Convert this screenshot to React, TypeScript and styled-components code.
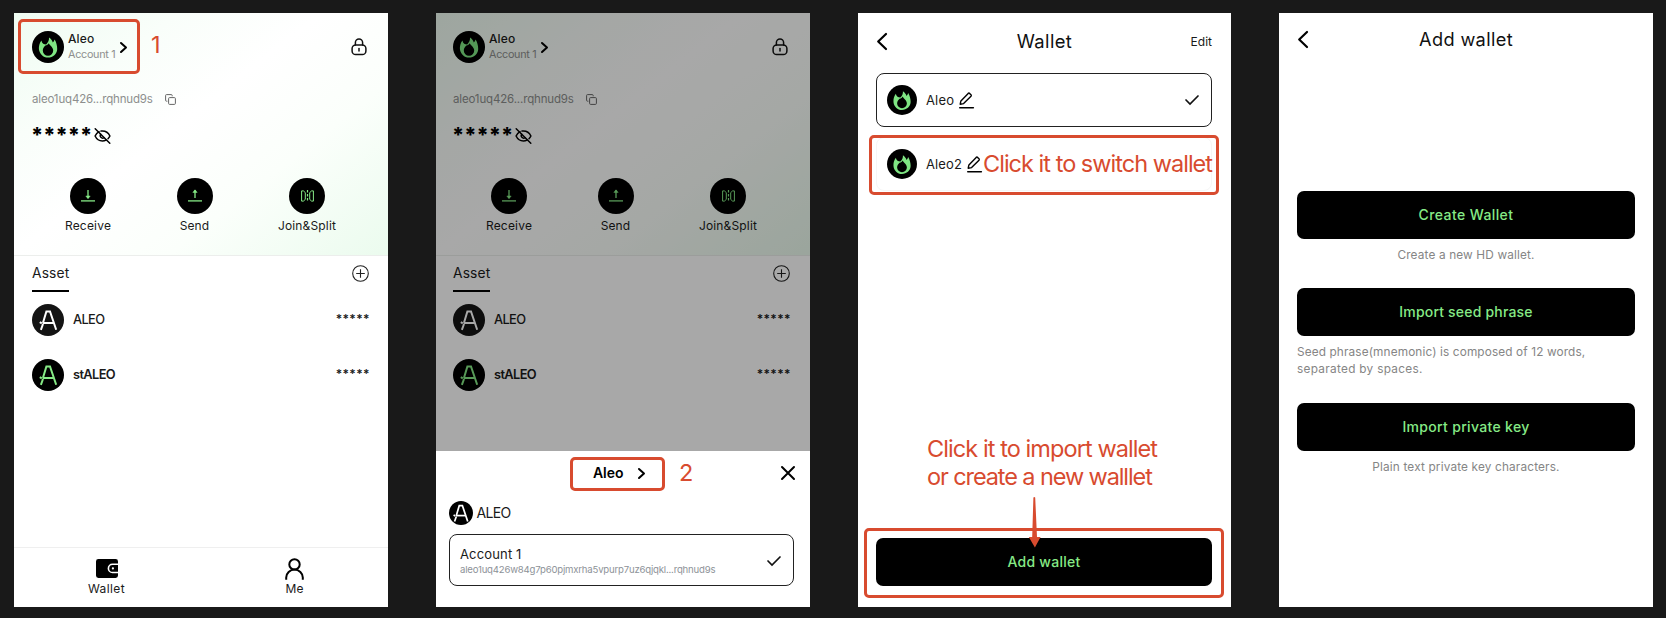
import React from "react";
import styled, { createGlobalStyle, css } from "styled-components";

const RED = "#d84b2f";
const GREEN = "#86ea86";

const Global = createGlobalStyle`
  * { box-sizing: border-box; }
  html, body { margin: 0; padding: 0; background: #191919; }
  body { font-family: Inter, "Liberation Sans", sans-serif; color: #111; overflow: hidden; }
`;

const Board = styled.main`
  display: flex;
  gap: 48px;
  width: 1666px;
  height: 618px;
  padding: 13px 14px;
`;

const Screen = styled.section<{ $w?: number }>`
  position: relative;
  flex: none;
  display: flex;
  flex-direction: column;
  width: ${(p) => p.$w ?? 374}px;
  height: 594px;
  background: #fff;
`;

const Text = styled.span<{ $s: number; $lh?: number; $ls?: number; $wt?: number; $c?: string }>`
  display: block;
  width: max-content;
  font-size: ${(p) => p.$s}px;
  line-height: ${(p) => p.$lh ?? 18}px;
  letter-spacing: ${(p) => p.$ls ?? 0}px;
  font-weight: ${(p) => p.$wt ?? 400};
  color: ${(p) => p.$c ?? "#1a1a1a"};
  white-space: nowrap;
`;

const Icon = styled.svg`
  display: block;
  flex: none;
  overflow: visible;
`;

/* ---------- icons ---------- */

const Flame = ({ size }: { size: number }) => (
  <Icon width={size} height={size} viewBox="0 0 32 32">
    <circle cx="16" cy="16" r="16" fill="#000" />
    <path
      d="M9.4 9.4C7.4 12 6.7 15.2 6.9 18C7.4 22.8 11.1 26.6 16 26.6C20.9 26.6 25 23 25.2 18.2C25.3 14.6 24.2 11 22.6 8.4C22.2 9.8 21.6 10.8 20.8 11.6C20.2 9.6 19 8 17 6.6C17.2 9.4 16.2 11.2 14.2 13.4C12 13.4 10 12.4 9.4 9.4Z"
      fill="#7fe583"
    />
    <path
      d="M16.8 12.2C17.4 14.4 21.2 15.8 21.2 19.6A5.2 5.2 0 0 1 10.8 19.6C10.8 17.4 12 15.8 13.4 14.6C14.8 14.2 16.2 13.4 16.8 12.2Z"
      fill="#000"
    />
  </Icon>
);

const AleoMark = ({ size, color = "#fff", bg = "#000", big }: { size: number; color?: string; bg?: string; big?: boolean }) => (
  <Icon width={size} height={size} viewBox="0 0 32 32">
    <circle cx="16" cy="16" r="16" fill={bg} />
    <g
      fill="none"
      stroke={color}
      strokeWidth="2"
      transform={big ? "translate(16 16) scale(1.15) translate(-16.4 -16)" : undefined}
    >
      <path d="M11 18.8L14.4 7.4H18L24.2 25.8" />
      <path d="M10.6 19H21.8" />
      <path d="M7.8 18.2L9.8 19.4" />
      <path d="M11 20L8.9 25.8" />
    </g>
  </Icon>
);

const Chevron = ({ w, h, sw, left }: { w: number; h: number; sw: number; left?: boolean }) => (
  <Icon width={w} height={h} viewBox={`0 0 ${w} ${h}`}>
    <path
      d={left ? `M${w - 1} 1L1.2 ${h / 2}L${w - 1} ${h - 1}` : `M1 1L${w - 1} ${h / 2}L1 ${h - 1}`}
      fill="none"
      stroke="#000"
      strokeWidth={sw}
      strokeLinecap="round"
      strokeLinejoin="round"
    />
  </Icon>
);

const Lock = () => (
  <Icon width="16" height="18" viewBox="0 0 16 18" fill="none" stroke="#111" strokeWidth="1.5" strokeLinecap="round">
    <path d="M4.4 7V4.6A3.6 3.6 0 0 1 11.6 4.6V7" />
    <rect x="1.1" y="7" width="13.8" height="9.6" rx="3.6" />
    <path d="M8 10.6V13" />
  </Icon>
);

const Copy = () => (
  <Icon width="11" height="11" viewBox="0 0 11 11" fill="none" stroke="#666" strokeWidth="1">
    <rect x="3.6" y="3.6" width="6.8" height="6.8" rx="1" />
    <path d="M2.4 7.2H1.5A.9.9 0 0 1 .6 6.3V1.5A.9.9 0 0 1 1.5.6H6.3A.9.9 0 0 1 7.2 1.5V2.3" />
  </Icon>
);

const EyeOff = () => (
  <Icon width="17" height="16" viewBox="0 0 17 16" fill="none" stroke="#000" strokeWidth="1.5" strokeLinecap="round">
    <path d="M5 3.6C3.2 4.6 1.8 6.4 1.1 8C2.6 11.2 5.4 13 8.4 13C9.8 13 11 12.6 12.1 12" />
    <path d="M7 3.1C11.2 2.6 14.4 4.8 15.9 8C15.4 9.1 14.8 9.9 14 10.7" />
    <path d="M6.6 6.2A2.6 2.6 0 0 0 10 9.9" />
    <path d="M1.2 .8L15.8 15.2" />
  </Icon>
);

const Transfer = ({ up }: { up?: boolean }) => (
  <Icon width="14" height="13" viewBox="0 0 14 13" fill="none" stroke={GREEN} strokeWidth="1.3">
    <path d="M0 11.9H14" />
    <path d="M7 1V9" />
    {up ? (
      <path d="M4.8 3.4L7 .8L9.2 3.4Z" fill={GREEN} strokeWidth=".5" />
    ) : (
      <path d="M4.8 7L7 9.8L9.2 7Z" fill={GREEN} strokeWidth=".5" />
    )}
  </Icon>
);

const JoinSplit = () => (
  <Icon width="13" height="12" viewBox="0 0 13 12" fill="none" stroke={GREEN} strokeWidth="1">
    <path d="M.6 .9H2.4L4.3 2.6V9.4L2.4 11.1H.6Z" />
    <path d="M12.4 .9H10.6L8.7 2.6V9.4L10.6 11.1H12.4Z" />
    <path d="M6.5 0V12" strokeDasharray="2.4 1.6" strokeWidth="1.2" />
  </Icon>
);

const PlusCircle = () => (
  <Icon width="17" height="17" viewBox="0 0 17 17" fill="none" stroke="#222" strokeWidth="1.1">
    <circle cx="8.5" cy="8.5" r="7.8" />
    <path d="M8.5 4.2V12.8M4.2 8.5H12.8" />
  </Icon>
);

const WalletIcon = () => (
  <Icon width="22" height="19" viewBox="0 0 22 19">
    <path d="M2.4 0H19.6A2.4 2.4 0 0 1 22 2.4V4.6H16.4A4.8 4.8 0 0 0 16.4 14.2H22V16.6A2.4 2.4 0 0 1 19.6 19H2.4A2.4 2.4 0 0 1 0 16.6V2.4A2.4 2.4 0 0 1 2.4 0Z" fill="#000" />
    <path d="M22 6H16.6A3.4 3.4 0 0 0 16.6 12.8H22Z" fill="#000" />
    <circle cx="16.9" cy="9.4" r="1.1" fill="#fff" />
  </Icon>
);

const Person = () => (
  <Icon width="19" height="22" viewBox="0 0 19 22" fill="none" stroke="#000" strokeWidth="2">
    <circle cx="9.5" cy="6.4" r="5.2" />
    <path d="M1.2 21.8V19.6A8.3 8 0 0 1 17.8 19.6V21.8" />
  </Icon>
);

const Close = () => (
  <Icon width="14" height="14" viewBox="0 0 14 14" stroke="#000" strokeWidth="2" strokeLinecap="round">
    <path d="M1 1L13 13M13 1L1 13" />
  </Icon>
);

const Check = () => (
  <Icon width="14" height="10" viewBox="0 0 14 10" fill="none" stroke="#111" strokeWidth="1.7" strokeLinecap="round">
    <path d="M1 5L5 9L13 1" />
  </Icon>
);

const Pencil = () => (
  <Icon width="15" height="17" viewBox="0 0 15 17" fill="none" stroke="#000" strokeWidth="1.4" strokeLinejoin="round" strokeLinecap="round">
    <path d="M1.2 12.2L1.9 8.9L9.2 1.4Q9.9 .8 10.6 1.4L12 2.8Q12.6 3.5 12 4.2L4.6 11.6Z" />
    <path d="M.7 15.7H14.4" />
  </Icon>
);

const Arrow = styled.svg`
  position: absolute;
  left: 170px;
  top: 483px;
`;

/* ---------- home screen ---------- */

const Hero = styled.header<{ $pad: number }>`
  display: flex;
  flex-direction: column;
  height: 243px;
  padding: 18px ${(p) => 39 - p.$pad}px 0 ${(p) => p.$pad}px;
  border-bottom: 1px solid #eceeec;
  background: linear-gradient(142deg, #effcf2 0%, #f9fefa 24%, #fff 45%, #fbfffb 68%, #ebfbee 100%);
`;

const Row = styled.div<{ $gap?: number; $h?: number; $between?: boolean }>`
  display: flex;
  align-items: center;
  gap: ${(p) => p.$gap ?? 0}px;
  ${(p) => p.$h && css`height: ${p.$h}px;`}
  ${(p) => p.$between && css`justify-content: space-between;`}
`;

const Names = styled.div`
  display: flex;
  flex-direction: column;
  width: 48px;
  height: 32px;
`;

const AddressRow = styled(Row)`
  margin-top: 27px;
  height: 18px;
`;

const BalanceRow = styled(Row)`
  margin-top: 13px;
  height: 24px;
  align-items: flex-start;
`;

const Balance = styled.div`
  width: 59px;
  padding-top: 3px;
  margin-left: -1px;
`;

const EyeSlot = styled.div`
  padding: 7px 0 0 4px;
`;

const Actions = styled.nav`
  display: flex;
  margin-top: 32.5px;
`;

const Action = styled.div<{ $w: number }>`
  display: flex;
  flex-direction: column;
  flex: none;
  align-items: center;
  gap: 3.5px;
  width: ${(p) => p.$w}px;
`;

const Disc = styled.div`
  display: grid;
  place-items: center;
  width: 36px;
  height: 36px;
  border-radius: 50%;
  background: #000;
`;

const Assets = styled.div<{ $pad: number }>`
  flex: 1;
  padding: 0 ${(p) => 37 - p.$pad}px 0 ${(p) => p.$pad}px;
`;

const TabRow = styled.div`
  display: flex;
  align-items: flex-start;
  justify-content: space-between;
  height: 36px;
`;

const Tab = styled.div`
  height: 36px;
  padding-top: 8px;
  border-bottom: 2px solid #000;
`;

const PlusSlot = styled.div`
  padding-top: 9px;
`;

const AssetRow = styled(Row)`
  height: 55.5px;
`;

const Stars = styled.div`
  margin: 0 -1px 0 auto;
  padding-bottom: 2px;
`;

const TabBar = styled.footer`
  display: flex;
  height: 60px;
  border-top: 1px solid #efefef;
  padding-top: 9px;
`;

const TabItem = styled.div<{ $w: number }>`
  display: flex;
  flex-direction: column;
  flex: none;
  align-items: center;
  width: ${(p) => p.$w}px;
`;

const TabGlyph = styled.div`
  display: grid;
  place-items: center;
  height: 23px;
`;

const HomeContent = ({ pad, tabs }: { pad: number; tabs?: boolean }) => (
  <>
    <Hero $pad={pad}>
      <Row $between $h={32}>
        <Row $gap={4}>
          <Flame size={32} />
          <Names>
            <Text $s={12} $lh={16} $wt={500} $ls={0.1}>Aleo</Text>
            <Text $s={10.8} $lh={15} $ls={-0.3} $c="#8d8f8e">Account 1</Text>
          </Names>
          <Chevron w={7} h={11} sw={2} />
        </Row>
        <Lock />
      </Row>
      <AddressRow $gap={12.5}>
        <Text $s={11.5} $ls={-0.15} $c="#8d8f8e">aleo1uq426...rqhnud9s</Text>
        <Copy />
      </AddressRow>
      <BalanceRow>
        <Balance><Text $s={21} $lh={24} $ls={0} $wt={800} $c="#000">*****</Text></Balance>
        <EyeSlot><EyeOff /></EyeSlot>
      </BalanceRow>
      <Actions>
        <Action $w={112}><Disc><Transfer /></Disc><Text $s={12} $ls={0.2}>Receive</Text></Action>
        <Action $w={101}><Disc><Transfer up /></Disc><Text $s={12} $ls={0.15}>Send</Text></Action>
        <Action $w={124}><Disc><JoinSplit /></Disc><Text $s={12} $ls={0.15}>Join&amp;Split</Text></Action>
      </Actions>
    </Hero>
    <Assets $pad={pad}>
      <TabRow>
        <Tab><Text $s={13.8} $ls={0.14}>Asset</Text></Tab>
        <PlusSlot><PlusCircle /></PlusSlot>
      </TabRow>
      <AssetRow $gap={9}>
        <AleoMark size={32} bg="#141414" />
        <Text $s={12.8} $ls={-0.6} $wt={500}>ALEO</Text>
        <Stars><Text $s={12} $ls={0.4} $wt={600}>*****</Text></Stars>
      </AssetRow>
      <AssetRow $gap={9}>
        <AleoMark size={32} color={GREEN} />
        <Text $s={12.8} $ls={-0.6} $wt={600}>stALEO</Text>
        <Stars><Text $s={12} $ls={0.4} $wt={600}>*****</Text></Stars>
      </AssetRow>
    </Assets>
    {tabs && (
      <TabBar>
        <TabItem $w={185}><TabGlyph><WalletIcon /></TabGlyph><Text $s={12} $ls={0.4}>Wallet</Text></TabItem>
        <TabItem $w={191}><TabGlyph><Person /></TabGlyph><Text $s={12}>Me</Text></TabItem>
      </TabBar>
    )}
  </>
);

/* ---------- callouts drawn over the screens ---------- */

const Callout = styled.div<{ $x: number; $y: number; $w: number; $h: number }>`
  position: absolute;
  left: ${(p) => p.$x}px;
  top: ${(p) => p.$y}px;
  width: ${(p) => p.$w}px;
  height: ${(p) => p.$h}px;
  border: 3px solid ${RED};
  border-radius: 5px;
`;

const Note = styled.div<{ $x: number; $y: number }>`
  position: absolute;
  left: ${(p) => p.$x}px;
  top: ${(p) => p.$y}px;
`;

/* ---------- account sheet ---------- */

const Shade = styled.div`
  position: absolute;
  inset: 0;
  display: flex;
  flex-direction: column;
  justify-content: flex-end;
  background: rgba(0, 0, 0, 0.34);
`;

const Sheet = styled.div`
  height: 156px;
  padding: 0 15px 0 13px;
  background: #fff;
`;

const SheetHead = styled.div`
  display: grid;
  grid-template-columns: 1fr auto 1fr;
  align-items: center;
  height: 44px;
`;

const SheetTitle = styled(Row)`
  grid-column: 2;
  margin-right: 6.5px;
`;

const CloseSlot = styled.div`
  justify-self: end;
`;

const AccountCard = styled.div`
  display: flex;
  align-items: center;
  justify-content: space-between;
  height: 52px;
  width: 345px;
  margin-top: 4px;
  padding: 1px 12px 0 10px;
  border: 1px solid #222;
  border-radius: 8px;
`;

/* ---------- wallet screens ---------- */

const TopBar = styled.header<{ $h: number; $px: number }>`
  display: grid;
  grid-template-columns: 1fr auto 1fr;
  align-items: center;
  height: ${(p) => p.$h}px;
  padding: 0 ${(p) => p.$px}px;
`;

const Title = styled.div`
  padding-bottom: 2px;
`;

const RightSlot = styled.div`
  justify-self: end;
`;

const WalletList = styled.div`
  display: flex;
  flex-direction: column;
  gap: 10px;
  padding: 3px 19px 0 18px;
`;

const WalletRow = styled.div<{ $active?: boolean }>`
  display: flex;
  align-items: center;
  height: 54px;
  padding: 0 12px 0 10px;
  border: 1px solid ${(p) => (p.$active ? "#222" : "#f6f6f6")};
  border-radius: 8px;
`;

const RowName = styled.div`
  margin: 0 5px 0 9px;
`;

const Spacer = styled.div`
  flex: 1;
`;

const Button = styled.button`
  display: flex;
  align-items: center;
  justify-content: center;
  width: 100%;
  height: 48px;
  padding: 0;
  border: 0;
  border-radius: 7px;
  background: #000;
  font-family: inherit;
`;

const Footer = styled.div`
  padding: 0 19px 20.6px 18px;
`;

const Options = styled.div`
  display: flex;
  flex-direction: column;
  padding: 125.4px 18px 0;
`;

const Hint = styled.div<{ $h: number; $left?: boolean }>`
  display: flex;
  flex-direction: column;
  align-items: ${(p) => (p.$left ? "flex-start" : "center")};
  height: ${(p) => p.$h}px;
  padding-top: 7px;
`;

export default function App() {
  return (
    <>
      <Global />
      <Board>
        <Screen>
          <HomeContent pad={18} tabs />
          <Callout $x={4} $y={6} $w={122} $h={55} />
          <Note $x={137} $y={18}><Text $s={23.5} $lh={28} $c={RED}>1</Text></Note>
        </Screen>
        <Screen>
          <HomeContent pad={17} />
          <Shade>
            <Sheet>
              <SheetHead>
                <SheetTitle $gap={14}>
                  <Text $s={14} $wt={600} $c="#000">Aleo</Text>
                  <Chevron w={7} h={11} sw={2} />
                </SheetTitle>
                <CloseSlot><Close /></CloseSlot>
              </SheetHead>
              <Row $gap={3.5} $h={35}>
                <AleoMark size={24} big />
                <Text $s={14} $ls={-0.7}>ALEO</Text>
              </Row>
              <AccountCard>
                <div>
                  <Text $s={13} $lh={18} $ls={0.15}>Account 1</Text>
                  <Text $s={9.6} $lh={14} $ls={-0.2} $c="#8d9298">
                    aleo1uq426w84g7p60pjmxrha5vpurp7uz6qjqkl...rqhnud9s
                  </Text>
                </div>
                <Check />
              </AccountCard>
            </Sheet>
          </Shade>
          <Callout $x={134} $y={444} $w={95} $h={34} />
          <Note $x={243} $y={446}><Text $s={23.5} $lh={28} $c={RED}>2</Text></Note>
        </Screen>
        <Screen $w={373}>
          <TopBar $h={57} $px={19}>
            <Chevron w={10} h={17} sw={2.2} left />
            <Title><Text $s={18.4} $lh={24} $ls={0.4} $c="#111">Wallet</Text></Title>
            <RightSlot><Text $s={12}>Edit</Text></RightSlot>
          </TopBar>
          <WalletList>
            <WalletRow $active>
              <Flame size={30} />
              <RowName><Text $s={13} $ls={0.15}>Aleo</Text></RowName>
              <Pencil />
              <Spacer />
              <Check />
            </WalletRow>
            <WalletRow>
              <Flame size={30} />
              <RowName><Text $s={13} $ls={0.1}>Aleo2</Text></RowName>
              <Pencil />
            </WalletRow>
          </WalletList>
          <Spacer />
          <Footer>
            <Button><Text $s={14} $ls={0.25} $wt={500} $c={GREEN}>Add wallet</Text></Button>
          </Footer>
          <Callout $x={11} $y={122} $w={350} $h={60} />
          <Note $x={125} $y={137}><Text $s={23.5} $lh={28} $ls={-0.98} $c={RED}>Click it to switch wallet</Text></Note>
          <Note $x={69} $y={422}>
            <Text $s={23.5} $lh={28} $ls={-0.92} $c={RED}>Click it to import wallet</Text>
            <Text $s={23.5} $lh={27} $ls={-1.1} $c={RED}>or create a new walllet</Text>
          </Note>
          <Callout $x={6} $y={515} $w={360} $h={70} />
          <Arrow width="13" height="52" viewBox="0 0 13 52">
            <path d="M5.4 1.5Q6.3 .5 7.2 1.5L9 41L12.6 41L6.9 51.5L.8 41L4.2 41Z" fill={RED} />
          </Arrow>
        </Screen>
        <Screen>
          <TopBar $h={53} $px={19}>
            <Chevron w={10} h={17} sw={2.2} left />
            <Title><Text $s={18.2} $lh={24} $ls={0.35} $c="#111">Add wallet</Text></Title>
            <span />
          </TopBar>
          <Options>
            <Button><Text $s={14} $ls={0.4} $wt={500} $c={GREEN}>Create Wallet</Text></Button>
            <Hint $h={49}><Text $s={11.8} $ls={0.15} $c="#858585">Create a new HD wallet.</Text></Hint>
            <Button><Text $s={14} $ls={0.19} $wt={500} $c={GREEN}>Import seed phrase</Text></Button>
            <Hint $h={66.5} $left>
              <Text $s={11.8} $ls={0.13} $c="#858585">Seed phrase(mnemonic) is composed of 12 words,</Text>
              <Text $s={11.8} $lh={17.5} $ls={0.3} $c="#858585">separated by spaces.</Text>
            </Hint>
            <Button><Text $s={14} $ls={0.32} $wt={500} $c={GREEN}>Import private key</Text></Button>
            <Hint $h={40}><Text $s={11.8} $ls={0.16} $c="#858585">Plain text private key characters.</Text></Hint>
          </Options>
        </Screen>
      </Board>
    </>
  );
}
